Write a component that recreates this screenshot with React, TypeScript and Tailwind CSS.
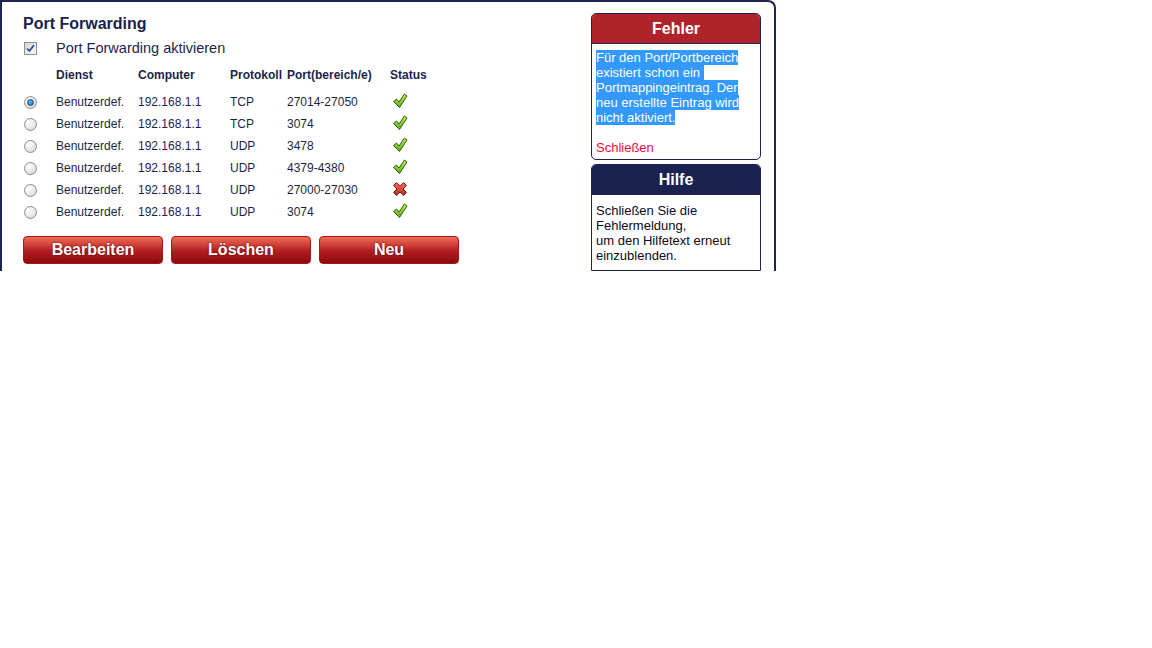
import React from "react";

const rows = [
  { service: "Benutzerdef.", host: "192.168.1.1", proto: "TCP", ports: "27014-27050", ok: true, selected: true },
  { service: "Benutzerdef.", host: "192.168.1.1", proto: "TCP", ports: "3074", ok: true },
  { service: "Benutzerdef.", host: "192.168.1.1", proto: "UDP", ports: "3478", ok: true },
  { service: "Benutzerdef.", host: "192.168.1.1", proto: "UDP", ports: "4379-4380", ok: true },
  { service: "Benutzerdef.", host: "192.168.1.1", proto: "UDP", ports: "27000-27030", ok: false },
  { service: "Benutzerdef.", host: "192.168.1.1", proto: "UDP", ports: "3074", ok: true },
];

const errorLines = ["Für den Port/Portbereich", "existiert schon ein\u00a0", "Portmappingeintrag. Der", "neu erstellte Eintrag wird", "nicht aktiviert."];

const helpLines = ["Schließen Sie die", "Fehlermeldung,", "um den Hilfetext erneut", "einzublenden."];

function CheckIcon() {
  return (
    <svg width="16" height="16" viewBox="0 0 16 16">
      <defs>
        <linearGradient id="okFill" x1="0" y1="0" x2="0" y2="1">
          <stop offset="0" stopColor="#c4f060" />
          <stop offset="1" stopColor="#5aa814" />
        </linearGradient>
      </defs>
      <path d="M1.5 8.5 L4.5 6 L7 9 L12.5 1 L15 3 L7.5 14.5 Z" fill="url(#okFill)" stroke="#2f5e08" strokeWidth="1" strokeLinejoin="round" />
    </svg>
  );
}

function CrossIcon() {
  return (
    <svg width="16" height="16" viewBox="0 0 16 16">
      <defs>
        <linearGradient id="errFill" x1="0" y1="0" x2="0" y2="1">
          <stop offset="0" stopColor="#f07060" />
          <stop offset="1" stopColor="#c02820" />
        </linearGradient>
      </defs>
      <path
        d="M1.5 4.5 L4.5 1.5 L8 5 L11.5 1.5 L14.5 4.5 L11 8 L14.5 11.5 L11.5 14.5 L8 11 L4.5 14.5 L1.5 11.5 L5 8 Z"
        fill="url(#errFill)"
        stroke="#7e1a14"
        strokeWidth="1"
        strokeLinejoin="round"
      />
    </svg>
  );
}

function Radio({ checked }: { checked?: boolean }) {
  return (
    <span className="ml-[1px] flex h-[13px] w-[13px] items-center justify-center rounded-full border border-[#8c8c8c] bg-[radial-gradient(circle_at_35%_30%,#ffffff,#d2d2d2)]">
      {checked && (
        <span className="h-[7px] w-[7px] rounded-full border border-[#1b4f86] bg-[radial-gradient(circle_at_40%_35%,#6cc0f4,#1662a6)]" />
      )}
    </span>
  );
}

function Checkbox() {
  return (
    <span className="flex h-[13px] w-[13px] items-center justify-center border border-[#8e8f8f] bg-[linear-gradient(135deg,#d8d8d8,#f6f6f6)]">
      <svg width="9" height="9" viewBox="0 0 9 9">
        <path d="M1 4.5 L3.5 7 L8 1" fill="none" stroke="#2a4a9a" strokeWidth="1.7" />
      </svg>
    </span>
  );
}

function RedButton({ label }: { label: string }) {
  return (
    <button className="h-[28px] w-[140px] rounded-[4px] border border-[#a4181c] bg-[linear-gradient(to_bottom,#ec6c52_0%,#d2403a_30%,#b01c20_55%,#8e0a0e_100%)] text-[16px] font-bold text-white [text-shadow:0_0_2px_#5a0000]">
      {label}
    </button>
  );
}

export default function App() {
  return (
    <div className="min-h-screen bg-white font-['Liberation_Sans',Arial,sans-serif] text-[#1c1f4a]">
      <div className="flex h-[271px] w-[776px] overflow-hidden rounded-tr-[8px] border-x-2 border-t-2 border-[#1e2452] pl-[21px] pr-[13px] pt-[11px]">
        {/* left: forwarding table */}
        <div className="flex-1 pt-[2px]">
          <h2 className="text-[16px] font-bold leading-[18px] text-[#1b2150]">Port Forwarding</h2>
          <label className="mt-[7px] flex items-center">
            <span className="ml-[1px]">
              <Checkbox />
            </span>
            <span className="ml-[19px] text-[14.5px] leading-[16px]">Port Forwarding aktivieren</span>
          </label>

          <div className="mt-[12px] grid grid-cols-[33px_82px_92px_57px_103px_1fr] text-[12px] font-bold leading-[14px]">
            <span />
            <span>Dienst</span>
            <span>Computer</span>
            <span>Protokoll</span>
            <span>Port(bereich/e)</span>
            <span>Status</span>
          </div>

          <div className="mt-[9px]">
            {rows.map((r, i) => (
              <div key={i} className="grid h-[22px] grid-cols-[33px_82px_92px_57px_103px_1fr] items-center text-[12px] leading-[14px]">
                <Radio checked={r.selected} />
                <span>{r.service}</span>
                <span>{r.host}</span>
                <span>{r.proto}</span>
                <span>{r.ports}</span>
                <span className="ml-[2px] -mt-[3px]">{r.ok ? <CheckIcon /> : <CrossIcon />}</span>
              </div>
            ))}
          </div>

          <div className="mt-[13px] flex gap-[8px]">
            <RedButton label="Bearbeiten" />
            <RedButton label="Löschen" />
            <RedButton label="Neu" />
          </div>
        </div>

        {/* right: message boxes */}
        <div className="flex w-[170px] flex-col gap-[4px]">
          <div className="overflow-hidden rounded-[5px] border border-[#1e2452]">
            <div className="flex h-[30px] items-center justify-center border-b border-[#1e2452] bg-[#b0232b] text-[16px] font-bold text-white">
              Fehler
            </div>
            <div className="px-[4px] pb-[4px] pt-[6px] text-[13px] leading-[15px]">
              {errorLines.map((l) => (
                <div key={l}>
                  <span className="inline-block whitespace-pre bg-[#3399ff] text-white">{l}</span>
                </div>
              ))}
              <div className="mt-[15px] text-[#e0103c]">Schließen</div>
            </div>
          </div>

          <div className="flex-1 rounded-t-[5px] border border-[#1e2452]">
            <div className="flex h-[30px] items-center justify-center rounded-t-[4px] bg-[#1b2150] text-[16px] font-bold text-white">
              Hilfe
            </div>
            <div className="px-[4px] pt-[8px] text-[13px] leading-[15px] text-[#0a0a1a]">
              {helpLines.map((l) => (
                <div key={l}>{l}</div>
              ))}
            </div>
          </div>
        </div>
      </div>
    </div>
  );
}
